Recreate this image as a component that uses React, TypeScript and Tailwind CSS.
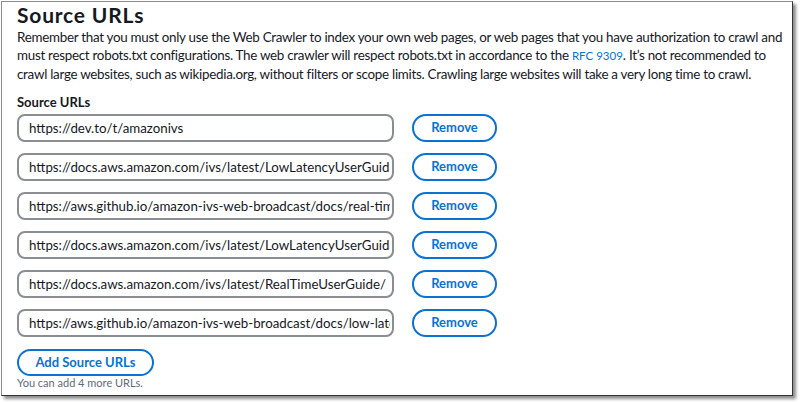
import React from 'react';

const urls = [
  'https://dev.to/t/amazonivs',
  'https://docs.aws.amazon.com/ivs/latest/LowLatencyUserGuide/',
  'https://aws.github.io/amazon-ivs-web-broadcast/docs/real-time-sdk-guides/',
  'https://docs.aws.amazon.com/ivs/latest/LowLatencyUserGuide/',
  'https://docs.aws.amazon.com/ivs/latest/RealTimeUserGuide/',
  'https://aws.github.io/amazon-ivs-web-broadcast/docs/low-latency-sdk-guides/',
];

export default function App() {
  return (
    <div className="w-[800px] h-[404px] bg-white font-['Lato',sans-serif] text-[#16191f]">
      <div className="ml-px mt-px w-[792px] h-[395px] bg-white border border-[#8c8c8c] border-r-[#333] border-b-[#333] shadow-[3px_3px_3px_rgba(0,0,0,0.45)] px-[15px]">
        <h2 className="text-[21px] font-bold leading-[26px] tracking-[0.8px]">Source URLs</h2>
        <p className="text-[13.4px] leading-[18px] tracking-[-0.28px] whitespace-nowrap">
          Remember that you must only use the Web Crawler to index your own web pages, or web pages that you have authorization to crawl and
          <br />
          must respect robots.txt configurations. The web crawler will respect robots.txt in accordance to the{' '}
          <a className="text-[#0972d3] text-[11.5px] tracking-normal">RFC 9309</a>. It’s not recommended to
          <br />
          crawl large websites, such as wikipedia.org, without filters or scope limits. Crawling large websites will take a very long time to crawl.
        </p>

        <div className="mt-[11px] text-[13px] font-bold leading-[16px]">Source URLs</div>
        <div className="mt-[4px] flex flex-col gap-[11px]">
          {urls.map((u, i) => (
            <div key={i} className="flex items-center">
              <input
                readOnly
                value={u}
                className="w-[377px] h-[28px] rounded-[8px] border-2 border-[#8a8d91] pl-[10px] pr-[2px] text-[13.3px] text-[#16191f] outline-none bg-white"
              />
              <button className="ml-[18px] w-[85px] h-[28px] rounded-full border-2 border-[#0972d3] text-[#0972d3] text-[13px] font-bold">
                Remove
              </button>
            </div>
          ))}
        </div>

        <button className="mt-[12px] w-[137px] h-[27px] rounded-full border-2 border-[#0972d3] text-[#0972d3] text-[13px] font-bold">
          Add Source URLs
        </button>
        <div className="text-[11px] leading-[14px] text-[#5f6b7a]">You can add 4 more URLs.</div>
      </div>
    </div>
  );
}
